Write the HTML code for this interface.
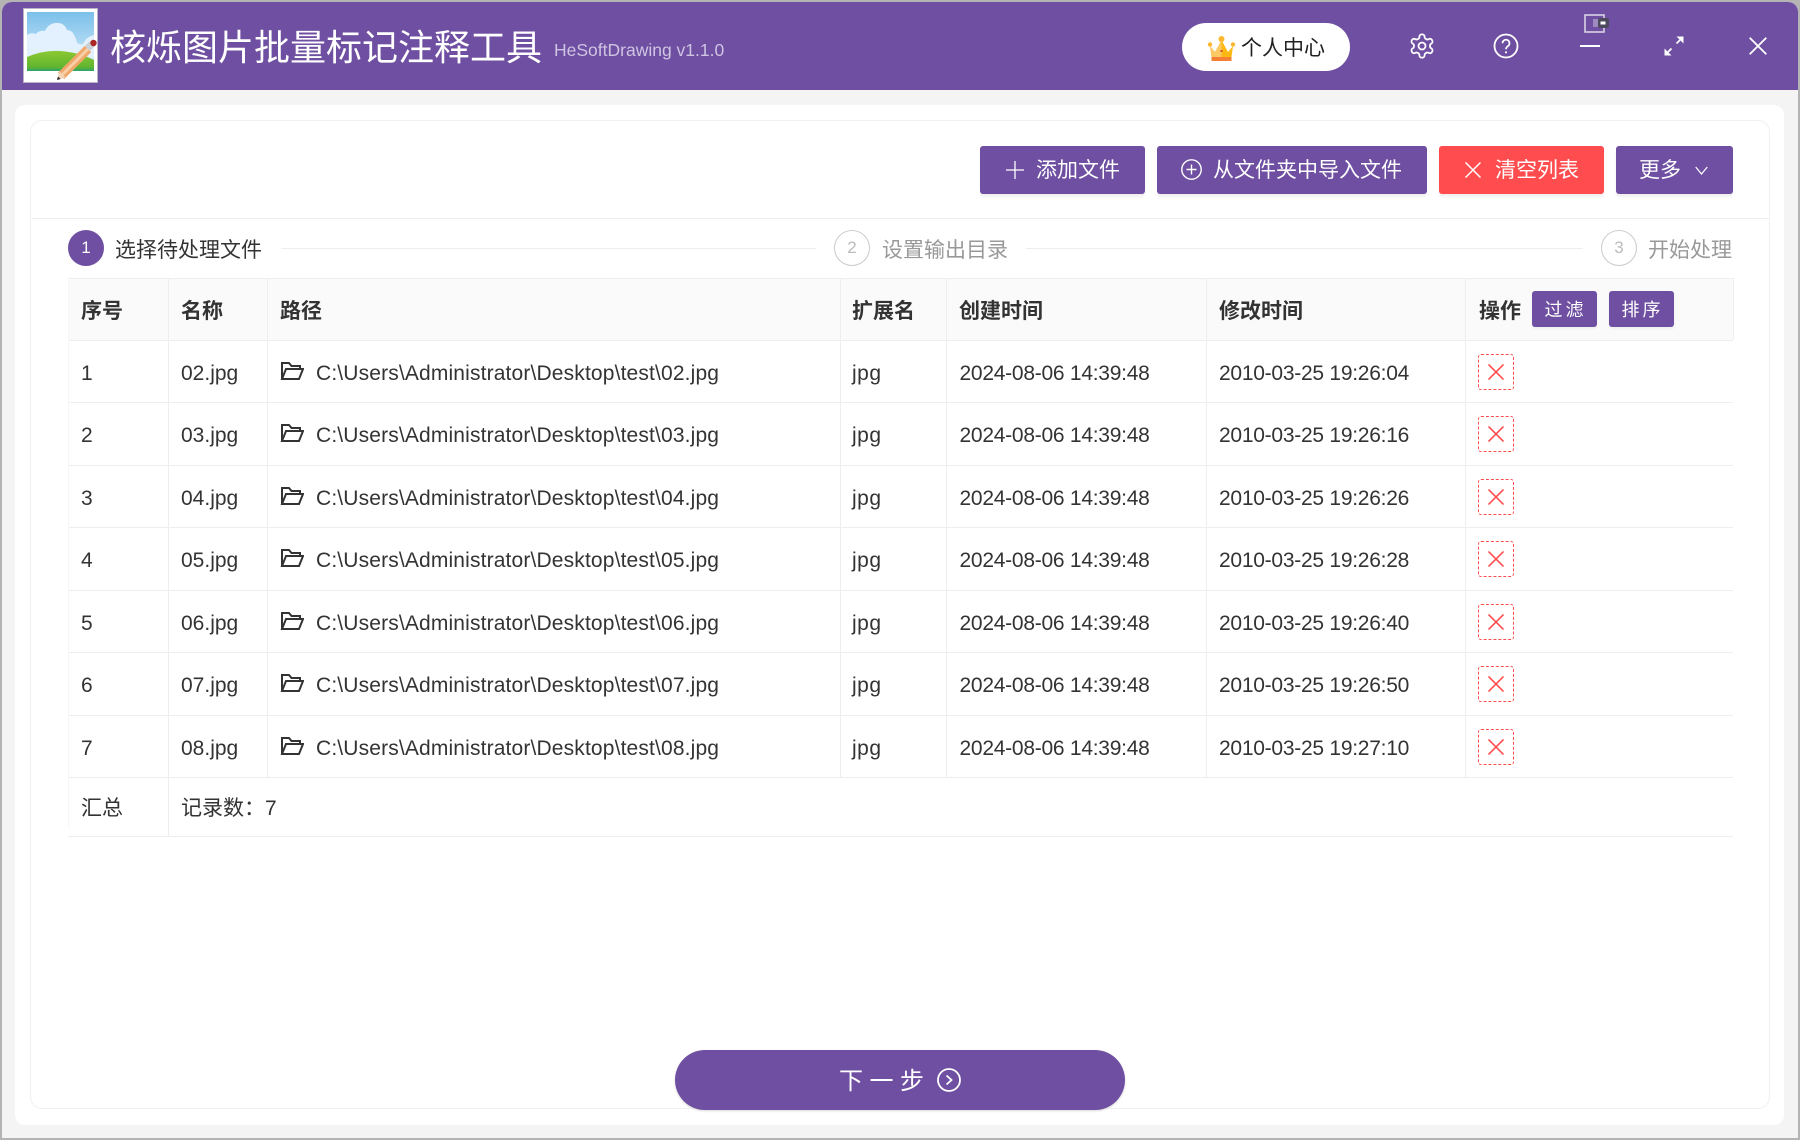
<!DOCTYPE html>
<html lang="zh-CN">
<head>
<meta charset="utf-8">
<title>核烁图片批量标记注释工具</title>
<style>
*{box-sizing:border-box;margin:0;padding:0}
html,body{width:1800px;height:1140px;overflow:hidden;background:#b4b4b4}
body{position:relative;font-family:"Liberation Sans","Noto Sans CJK SC",sans-serif;font-size:21px;color:#333}
.a{position:absolute;white-space:nowrap}
#win{position:absolute;left:2px;top:2px;width:1796px;height:1136px;background:#f4f4f4;border-radius:10px 10px 0 0;overflow:hidden}
#head{position:absolute;left:2px;top:2px;width:1796px;height:88px;background:#6f4fa1;border-radius:10px 10px 0 0}
.btn{position:absolute;top:146px;height:48px;background:#6f4fa1;color:#fff;border-radius:3px;box-shadow:0 3px 2px #f1f1f1;line-height:50px;white-space:nowrap}
.circ{position:absolute;top:230px;width:36px;height:36px;border-radius:50%;border:1px solid #ccc;color:#bbb;text-align:center;line-height:34px;font-size:17px}
.sline{position:absolute;top:248px;height:1px;background:#eeeeee}
.st{position:absolute;top:234px;line-height:34px;white-space:nowrap;color:#999}
.hl{position:absolute;height:1px;left:68px;width:1665px;background:#eeeeee}
.vl{position:absolute;width:1px;background:#eeeeee}
.th{position:absolute;top:278px;height:62px;line-height:68px;font-weight:700;color:#333;white-space:nowrap}
.t{position:absolute;height:62px;line-height:67px;white-space:nowrap;color:#333}
.p{letter-spacing:.15px}
.d{letter-spacing:-.26px}
.j{letter-spacing:.5px}
.fold{position:absolute;left:280px;width:24px;height:20px;margin-top:1px}
.del{position:absolute;left:1478px;width:36px;height:36px;border:1px dashed #ff4d4f;border-radius:3px}
.del svg{position:absolute;left:9px;top:9px}
.sm{position:absolute;top:291px;height:36px;background:#6f4fa1;color:#fff;border-radius:3px;font-size:18px;letter-spacing:3px;text-align:center;line-height:39px;padding-left:2px;box-shadow:0 2px 2px #efefef}
</style>
</head>
<body>
<div id="win"></div>
<div id="head"></div>

<!-- logo -->
<svg class="a" style="left:23px;top:8px" width="76" height="75" viewBox="0 0 76 75">
<defs><linearGradient id="sky" x1="0" y1="0" x2="0" y2="1"><stop offset="0" stop-color="#7cc0ea"/><stop offset="1" stop-color="#d8edfb"/></linearGradient>
<linearGradient id="gr" x1="0" y1="0" x2="0" y2="1"><stop offset="0" stop-color="#8cc832"/><stop offset=".8" stop-color="#62b52f"/><stop offset="1" stop-color="#2ba36c"/></linearGradient></defs>
<rect x=".5" y=".5" width="74" height="74" fill="#fff" stroke="#b9b3c4"/>
<rect x="4" y="4" width="67" height="59" fill="url(#sky)"/>
<path d="M4 27q4-3 9-1q3-4 9-3q3-7 10-8q9-1 12 7q5 0 7 5q2 3 3 8q4 2 6 1q3-7 11-9V50H4z" fill="#e2f1fd"/>
<path d="M4 49Q20 42 37 43Q55 44 71 52V63H4z" fill="url(#gr)"/>
<path d="M38 68L65 41" stroke="#f0a76a" stroke-width="9" fill="none"/>
<path d="M38 68L65 41" stroke="#f8cfa6" stroke-width="3" fill="none"/>
<path d="M34 72L36.500 63.500L42.500 69.500Z" fill="#f3d5b8"/>
<path d="M34 72L35 68.500L37.500 71Z" fill="#222"/>
<path d="M62 38L67 33L72 38L67 43Z" fill="#c9d0d6"/>
<circle cx="70.500" cy="35" r="3.200" fill="#ab2524"/>
</svg>

<div class="a" style="left:110px;top:23px;font-size:36px;line-height:50px;color:#fff;width:440px">核烁图片批量标记注释工具</div>
<div class="a" style="left:554px;top:38px;font-size:17.500px;line-height:24px;color:#cfc4e2">HeSoftDrawing v1.1.0</div>

<!-- personal center -->
<div class="a" style="left:1182px;top:23px;width:168px;height:48px;border-radius:24px;background:#fff"></div>
<svg class="a" style="left:1207px;top:35px" width="29" height="27" viewBox="0 0 29 27">
<path d="M3 11L8 17L14.500 5L21 17L26 11L24.500 22H4.500Z" fill="#fdb913"/>
<path d="M14.500 5L8 17L3 11L4.500 22H14.500Z" fill="#fcc965"/>
<rect x="4.500" y="22" width="20" height="4" fill="#f57f33"/>
<circle cx="14.500" cy="4" r="3" fill="#fbb72e"/><circle cx="3" cy="9.500" r="2.200" fill="#fbb72e"/><circle cx="26" cy="9.500" r="2.200" fill="#fbb72e"/>
<rect x="13.500" y="15" width="2" height="2" fill="#d94a2a"/>
</svg>
<div class="a" style="left:1241px;top:32px;line-height:34px;color:#222">个人中心</div>

<!-- gear -->
<svg class="a" style="left:1408px;top:32px" width="28" height="28" viewBox="0 0 24 24" fill="none" stroke="#fff" stroke-width="1.500">
<path d="M12.220 2h-.44a2 2 0 0 0-2 2v.18a2 2 0 0 1-1 1.730l-.43.25a2 2 0 0 1-2 0l-.15-.08a2 2 0 0 0-2.730.73l-.22.38a2 2 0 0 0 .73 2.730l.15.1a2 2 0 0 1 1 1.720v.51a2 2 0 0 1-1 1.740l-.15.09a2 2 0 0 0-.73 2.730l.22.38a2 2 0 0 0 2.730.73l.15-.08a2 2 0 0 1 2 0l.43.25a2 2 0 0 1 1 1.730V20a2 2 0 0 0 2 2h.44a2 2 0 0 0 2-2v-.18a2 2 0 0 1 1-1.730l.43-.25a2 2 0 0 1 2 0l.15.08a2 2 0 0 0 2.730-.73l.22-.39a2 2 0 0 0-.73-2.730l-.15-.08a2 2 0 0 1-1-1.740v-.5a2 2 0 0 1 1-1.740l.15-.09a2 2 0 0 0 .73-2.730l-.22-.38a2 2 0 0 0-2.730-.73l-.15.08a2 2 0 0 1-2 0l-.43-.25a2 2 0 0 1-1-1.730V4a2 2 0 0 0-2-2z"/>
<circle cx="12" cy="12" r="3"/>
</svg>
<!-- help -->
<svg class="a" style="left:1493px;top:33px" width="26" height="26" viewBox="0 0 26 26" fill="none" stroke="#fff" stroke-width="1.800">
<circle cx="13" cy="13" r="11.500"/>
<path d="M9.500 10.200a3.500 3.500 0 1 1 5.500 2.900c-1.300.9-2 1.500-2 3.100" stroke-width="1.700"/>
<circle cx="13" cy="19.300" r="1.100" fill="#fff" stroke="none"/>
</svg>
<!-- small pip icon -->
<svg class="a" style="left:1584px;top:14px" width="26" height="19" viewBox="0 0 26 19">
<rect x="1" y="1" width="19" height="17" fill="none" stroke="#d9d3e4" stroke-width="1.600"/>
<rect x="9" y="5" width="6" height="8" fill="#9e8abf"/>
<rect x="14" y="4" width="11" height="10" rx="2" fill="#4e4a5e"/>
<rect x="16.500" y="7.500" width="5" height="3" fill="#fff"/>
</svg>
<div class="a" style="left:1580px;top:45px;width:20px;height:2px;background:#fff"></div>
<!-- expand -->
<svg class="a" style="left:1664px;top:36px" width="20" height="20" viewBox="0 0 20 20" fill="none" stroke="#fff" stroke-width="1.800">
<path d="M12.500 7.500L16 4"/><path d="M12.500 0.500H19.500V7.500Z" fill="#fff" stroke="none"/>
<path d="M7.500 12.500L4 16"/><path d="M0.500 12.500V19.500H7.500Z" fill="#fff" stroke="none"/>
</svg>
<!-- close -->
<svg class="a" style="left:1749px;top:37px" width="18" height="18" viewBox="0 0 18 18" fill="none" stroke="#fff" stroke-width="1.800"><path d="M.7.700L17.300 17.300M17.300.700L.7 17.300"/></svg>

<!-- panels -->
<div class="a" style="left:15px;top:105px;width:1769px;height:1020px;background:#fff;border-radius:10px"></div>
<div class="a" style="left:30px;top:120px;width:1740px;height:989px;background:#fff;border:1px solid #f0f0f0;border-radius:12px"></div>
<div class="a" style="left:32px;top:218px;width:1737px;height:1px;background:#eeeeee"></div>

<!-- toolbar -->
<div class="btn" style="left:980px;width:165px">
<svg class="a" style="left:26px;top:15px" width="18" height="18" viewBox="0 0 18 18" stroke="#fff" stroke-width="1.300"><path d="M9 0V18M0 9H18"/></svg>
<span class="a" style="left:56px;top:0">添加文件</span></div>
<div class="btn" style="left:1157px;width:270px">
<svg class="a" style="left:24px;top:13px" width="21" height="21" viewBox="0 0 21 21" fill="none" stroke="#fff" stroke-width="1.400"><circle cx="10.500" cy="10.500" r="9.700"/><path d="M10.500 5.500V15.500M5.500 10.500H15.500"/></svg>
<span class="a" style="left:56px;top:0">从文件夹中导入文件</span></div>
<div class="btn" style="left:1439px;width:165px;background:#ff4d4f">
<svg class="a" style="left:26px;top:16px" width="16" height="16" viewBox="0 0 16 16" stroke="#fff" stroke-width="1.500"><path d="M.5.500L15.500 15.500M15.500.500L.5 15.500"/></svg>
<span class="a" style="left:56px;top:0">清空列表</span></div>
<div class="btn" style="left:1616px;width:117px">
<span class="a" style="left:23px;top:0">更多</span>
<svg class="a" style="left:79px;top:20px" width="13" height="9" viewBox="0 0 13 9" fill="none" stroke="#fff" stroke-width="1.200"><path d="M.7 1L6.500 8L12.300 1"/></svg></div>

<!-- steps -->
<div class="circ" style="left:68px;background:#6f4fa1;border-color:#6f4fa1;color:#fff">1</div>
<div class="st" style="left:115px;color:#333">选择待处理文件</div>
<div class="sline" style="left:281px;width:535px"></div>
<div class="circ" style="left:834px">2</div>
<div class="st" style="left:882px">设置输出目录</div>
<div class="sline" style="left:1026px;width:557px"></div>
<div class="circ" style="left:1601px">3</div>
<div class="st" style="left:1648px">开始处理</div>

<!-- table frame -->
<div class="a" style="left:68px;top:278px;width:1665px;height:62px;background:#fafafa;border-radius:4px 4px 0 0"></div>
<div class="hl" style="top:278px"></div>
<div class="hl" style="top:340px"></div>
<div class="hl" style="top:402px"></div>
<div class="hl" style="top:465px"></div>
<div class="hl" style="top:527px"></div>
<div class="hl" style="top:590px"></div>
<div class="hl" style="top:652px"></div>
<div class="hl" style="top:715px"></div>
<div class="hl" style="top:777px"></div>
<div class="hl" style="top:836px"></div>
<div class="vl" style="left:68px;top:278px;height:550px;background:#f6f6f6"></div>
<div class="vl" style="left:168px;top:278px;height:558px"></div>
<div class="vl" style="left:267px;top:278px;height:499px"></div>
<div class="vl" style="left:840px;top:278px;height:499px"></div>
<div class="vl" style="left:946px;top:278px;height:499px"></div>
<div class="vl" style="left:1206px;top:278px;height:499px"></div>
<div class="vl" style="left:1465px;top:278px;height:499px"></div>
<div class="vl" style="left:1733px;top:278px;height:62px"></div>

<div class="th" style="left:81px">序号</div>
<div class="th" style="left:181px">名称</div>
<div class="th" style="left:280px">路径</div>
<div class="th" style="left:852px">扩展名</div>
<div class="th" style="left:959px">创建时间</div>
<div class="th" style="left:1219px">修改时间</div>
<div class="th" style="left:1479px">操作</div>
<div class="sm" style="left:1532px;width:65px">过滤</div>
<div class="sm" style="left:1609px;width:65px">排序</div>

<!-- rows -->
<svg width="0" height="0" style="position:absolute"><defs>
<g id="f" fill="none" stroke="#333" stroke-width="2"><path d="M2 18V2H9L11.500 5H20V8"/><path d="M2 18H19L23 8H6L2 18Z"/></g>
<g id="x" stroke="#ff4d4f" stroke-width="1.600"><path d="M.5.500L15.500 15.500M15.500.500L.5 15.500"/></g>
</defs></svg>

<div class="t" style="left:81px;top:340px">1</div><div class="t" style="left:181px;top:340px">02.jpg</div><svg class="fold" style="top:360px" viewBox="0 0 24 20"><use href="#f"/></svg><div class="t p" style="left:316px;top:340px">C:\Users\Administrator\Desktop\test\02.jpg</div><div class="t j" style="left:852px;top:340px">jpg</div><div class="t d" style="left:959.500px;top:340px">2024-08-06 14:39:48</div><div class="t d" style="left:1219px;top:340px">2010-03-25 19:26:04</div><div class="del" style="top:354px"><svg width="16" height="16"><use href="#x"/></svg></div>

<div class="t" style="left:81px;top:402px">2</div><div class="t" style="left:181px;top:402px">03.jpg</div><svg class="fold" style="top:422px" viewBox="0 0 24 20"><use href="#f"/></svg><div class="t p" style="left:316px;top:402px">C:\Users\Administrator\Desktop\test\03.jpg</div><div class="t j" style="left:852px;top:402px">jpg</div><div class="t d" style="left:959.500px;top:402px">2024-08-06 14:39:48</div><div class="t d" style="left:1219px;top:402px">2010-03-25 19:26:16</div><div class="del" style="top:416px"><svg width="16" height="16"><use href="#x"/></svg></div>

<div class="t" style="left:81px;top:465px">3</div><div class="t" style="left:181px;top:465px">04.jpg</div><svg class="fold" style="top:485px" viewBox="0 0 24 20"><use href="#f"/></svg><div class="t p" style="left:316px;top:465px">C:\Users\Administrator\Desktop\test\04.jpg</div><div class="t j" style="left:852px;top:465px">jpg</div><div class="t d" style="left:959.500px;top:465px">2024-08-06 14:39:48</div><div class="t d" style="left:1219px;top:465px">2010-03-25 19:26:26</div><div class="del" style="top:479px"><svg width="16" height="16"><use href="#x"/></svg></div>

<div class="t" style="left:81px;top:527px">4</div><div class="t" style="left:181px;top:527px">05.jpg</div><svg class="fold" style="top:547px" viewBox="0 0 24 20"><use href="#f"/></svg><div class="t p" style="left:316px;top:527px">C:\Users\Administrator\Desktop\test\05.jpg</div><div class="t j" style="left:852px;top:527px">jpg</div><div class="t d" style="left:959.500px;top:527px">2024-08-06 14:39:48</div><div class="t d" style="left:1219px;top:527px">2010-03-25 19:26:28</div><div class="del" style="top:541px"><svg width="16" height="16"><use href="#x"/></svg></div>

<div class="t" style="left:81px;top:590px">5</div><div class="t" style="left:181px;top:590px">06.jpg</div><svg class="fold" style="top:610px" viewBox="0 0 24 20"><use href="#f"/></svg><div class="t p" style="left:316px;top:590px">C:\Users\Administrator\Desktop\test\06.jpg</div><div class="t j" style="left:852px;top:590px">jpg</div><div class="t d" style="left:959.500px;top:590px">2024-08-06 14:39:48</div><div class="t d" style="left:1219px;top:590px">2010-03-25 19:26:40</div><div class="del" style="top:604px"><svg width="16" height="16"><use href="#x"/></svg></div>

<div class="t" style="left:81px;top:652px">6</div><div class="t" style="left:181px;top:652px">07.jpg</div><svg class="fold" style="top:672px" viewBox="0 0 24 20"><use href="#f"/></svg><div class="t p" style="left:316px;top:652px">C:\Users\Administrator\Desktop\test\07.jpg</div><div class="t j" style="left:852px;top:652px">jpg</div><div class="t d" style="left:959.500px;top:652px">2024-08-06 14:39:48</div><div class="t d" style="left:1219px;top:652px">2010-03-25 19:26:50</div><div class="del" style="top:666px"><svg width="16" height="16"><use href="#x"/></svg></div>

<div class="t" style="left:81px;top:715px">7</div><div class="t" style="left:181px;top:715px">08.jpg</div><svg class="fold" style="top:735px" viewBox="0 0 24 20"><use href="#f"/></svg><div class="t p" style="left:316px;top:715px">C:\Users\Administrator\Desktop\test\08.jpg</div><div class="t j" style="left:852px;top:715px">jpg</div><div class="t d" style="left:959.500px;top:715px">2024-08-06 14:39:48</div><div class="t d" style="left:1219px;top:715px">2010-03-25 19:27:10</div><div class="del" style="top:729px"><svg width="16" height="16"><use href="#x"/></svg></div>

<div class="t" style="left:81px;top:775px">汇总</div>
<div class="t" style="left:181px;top:775px">记录数：7</div>

<!-- next -->
<div class="a" style="left:675px;top:1050px;width:450px;height:60px;border-radius:30px;background:#6f4fa1;box-shadow:0 1px 2px #d8d8d8"></div>
<div class="a" style="left:839px;top:1060px;font-size:24px;line-height:44px;letter-spacing:6.500px;color:#fff">下一步</div>
<svg class="a" style="left:937px;top:1068px" width="24" height="24" viewBox="0 0 24 24" fill="none" stroke="#fff" stroke-width="1.800"><circle cx="12" cy="12" r="11"/><path d="M9.500 7.500L14.500 12L9.500 16.500"/></svg>
</body>
</html>
